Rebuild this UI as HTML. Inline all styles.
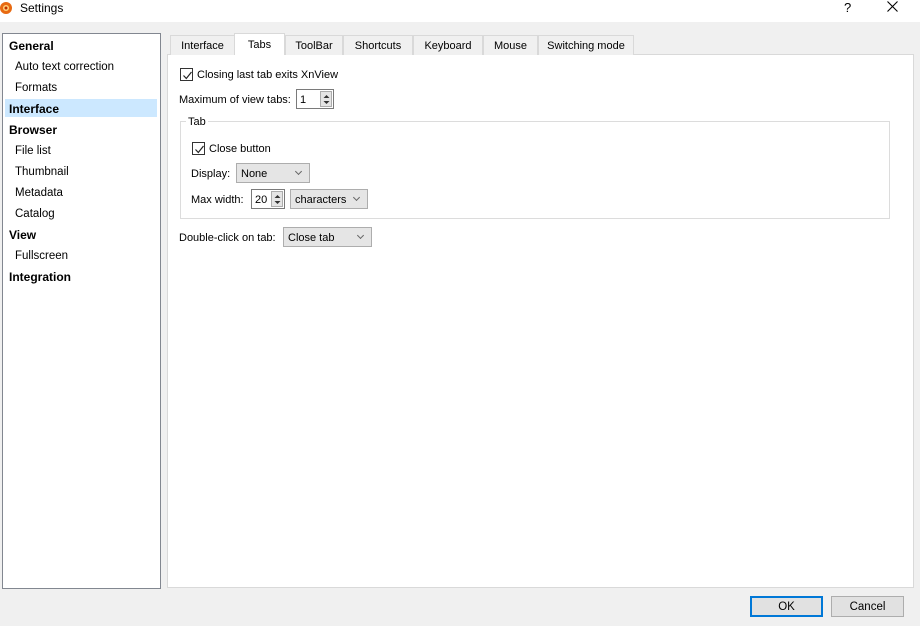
<!DOCTYPE html>
<html><head><style>
*{margin:0;padding:0;box-sizing:border-box}
body{width:920px;height:626px;background:#f0f0f0;font-family:"Liberation Sans",sans-serif;font-size:11px;line-height:15px;color:#000;position:relative;overflow:hidden}
.a{position:absolute;white-space:nowrap}
.t{margin-top:2px}
.title{left:0;top:0;width:920px;height:22px;background:#fff}
.left{left:2px;top:33px;width:159px;height:556px;background:#fff;border:1px solid #828790}
.pane{left:167px;top:54px;width:747px;height:534px;background:#fff;border:1px solid #d9d9d9}
.tab{top:35px;height:20px;background:#f0f0f0;border:1px solid #d9d9d9;border-bottom:none;text-align:center;line-height:20px}
.tab.sel{top:33px;height:22px;background:#fff;line-height:23px;z-index:2}
.cb{width:13px;height:13px;border:1px solid #333;background:#fff}
.cb svg{position:absolute;left:1px;top:1px}
.combo{height:20px;background:#e5e5e5;border:1px solid #adadad;line-height:20px;padding-left:4px}
.combo:after{content:"";position:absolute;right:8px;top:5px;width:4px;height:4px;border-right:1px solid #666;border-bottom:1px solid #666;transform:rotate(45deg)}
.spin{height:20px;background:#fff;border:1px solid #7a7a7a;line-height:20px;padding-left:3px}
.spb{position:absolute;right:1px;top:1px;width:12px;height:16px;background:#e5e5e5;border:1px solid #acacac}
.btn{top:596px;height:21px;background:#e1e1e1;border:1px solid #adadad;text-align:center;line-height:21px;font-size:11.5px}
b{font-weight:bold;font-size:12px}
</style></head><body>
<div class="a title"></div>
<svg class="a" style="left:0;top:1px" width="14" height="14" viewBox="0 0 14 14"><circle cx="6" cy="7" r="6" fill="#e86a12"/><circle cx="6" cy="7" r="3" fill="#ffd27a"/><circle cx="6" cy="7" r="1.5" fill="#c03000"/></svg>
<div class="a" style="left:20px;top:1px;font-size:12px;line-height:14px">Settings</div>
<div class="a" style="left:844px;top:0;font-size:13px">?</div>
<svg class="a" style="left:887px;top:1px" width="11" height="11"><path d="M0.5 0.5L10.5 10.5M10.5 0.5L0.5 10.5" stroke="#000" stroke-width="1.1"/></svg>

<div class="a left"></div>
<div class="a" style="left:5px;top:99px;width:152px;height:18px;background:#cce8ff"></div>
<div class="a" style="left:9px;top:39px"><b>General</b></div>
<div class="a" style="left:15px;top:60px;font-size:11.5px">Auto text correction</div>
<div class="a" style="left:15px;top:81px;font-size:11.5px">Formats</div>
<div class="a" style="left:9px;top:102px"><b>Interface</b></div>
<div class="a" style="left:9px;top:123px"><b>Browser</b></div>
<div class="a" style="left:15px;top:144px;font-size:11.5px">File list</div>
<div class="a" style="left:15px;top:165px;font-size:11.5px">Thumbnail</div>
<div class="a" style="left:15px;top:186px;font-size:11.5px">Metadata</div>
<div class="a" style="left:15px;top:207px;font-size:11.5px">Catalog</div>
<div class="a" style="left:9px;top:228px"><b>View</b></div>
<div class="a" style="left:15px;top:249px;font-size:11.5px">Fullscreen</div>
<div class="a" style="left:9px;top:270px"><b>Integration</b></div>

<div class="a pane"></div>
<div class="a tab" style="left:170px;width:65px">Interface</div>
<div class="a tab sel" style="left:234px;width:51px">Tabs</div>
<div class="a tab" style="left:285px;width:58px">ToolBar</div>
<div class="a tab" style="left:343px;width:70px">Shortcuts</div>
<div class="a tab" style="left:413px;width:70px">Keyboard</div>
<div class="a tab" style="left:483px;width:55px">Mouse</div>
<div class="a tab" style="left:538px;width:96px">Switching mode</div>

<div class="a cb" style="left:180px;top:68px"><svg width="11" height="11"><path d="M1.5 5.5L4.3 8.5L9.5 2" stroke="#222" fill="none" stroke-width="1.2"/></svg></div>
<div class="a" style="left:197px;top:68px">Closing last tab exits XnView</div>
<div class="a" style="left:179px;top:93px">Maximum of view tabs:</div>
<div class="a spin" style="left:296px;top:89px;width:38px">1<div class="spb"><svg style="position:absolute;left:2px;top:2px" width="7" height="11"><path d="M0.5 4L3.5 1L6.5 4ZM0.5 7L3.5 10L6.5 7Z" fill="#333"/></svg></div></div>

<div class="a" style="left:180px;top:121px;width:710px;height:98px;border:1px solid #dcdcdc"></div>
<div class="a" style="left:186px;top:115px;background:#fff;padding:0 2px">Tab</div>
<div class="a cb" style="left:192px;top:142px"><svg width="11" height="11"><path d="M1.5 5.5L4.3 8.5L9.5 2" stroke="#222" fill="none" stroke-width="1.2"/></svg></div>
<div class="a" style="left:209px;top:142px">Close button</div>
<div class="a" style="left:191px;top:167px">Display:</div>
<div class="a combo" style="left:236px;top:163px;width:74px">None</div>
<div class="a" style="left:191px;top:193px">Max width:</div>
<div class="a spin" style="left:251px;top:189px;width:34px">20<div class="spb"><svg style="position:absolute;left:2px;top:2px" width="7" height="11"><path d="M0.5 4L3.5 1L6.5 4ZM0.5 7L3.5 10L6.5 7Z" fill="#333"/></svg></div></div>
<div class="a combo" style="left:290px;top:189px;width:78px">characters</div>

<div class="a" style="left:179px;top:231px">Double-click on tab:</div>
<div class="a combo" style="left:283px;top:227px;width:89px">Close tab</div>

<div class="a btn" style="left:750px;width:73px;border:2px solid #0078d7;line-height:19px">OK</div>
<div class="a btn" style="left:831px;width:73px">Cancel</div>
</body></html>
